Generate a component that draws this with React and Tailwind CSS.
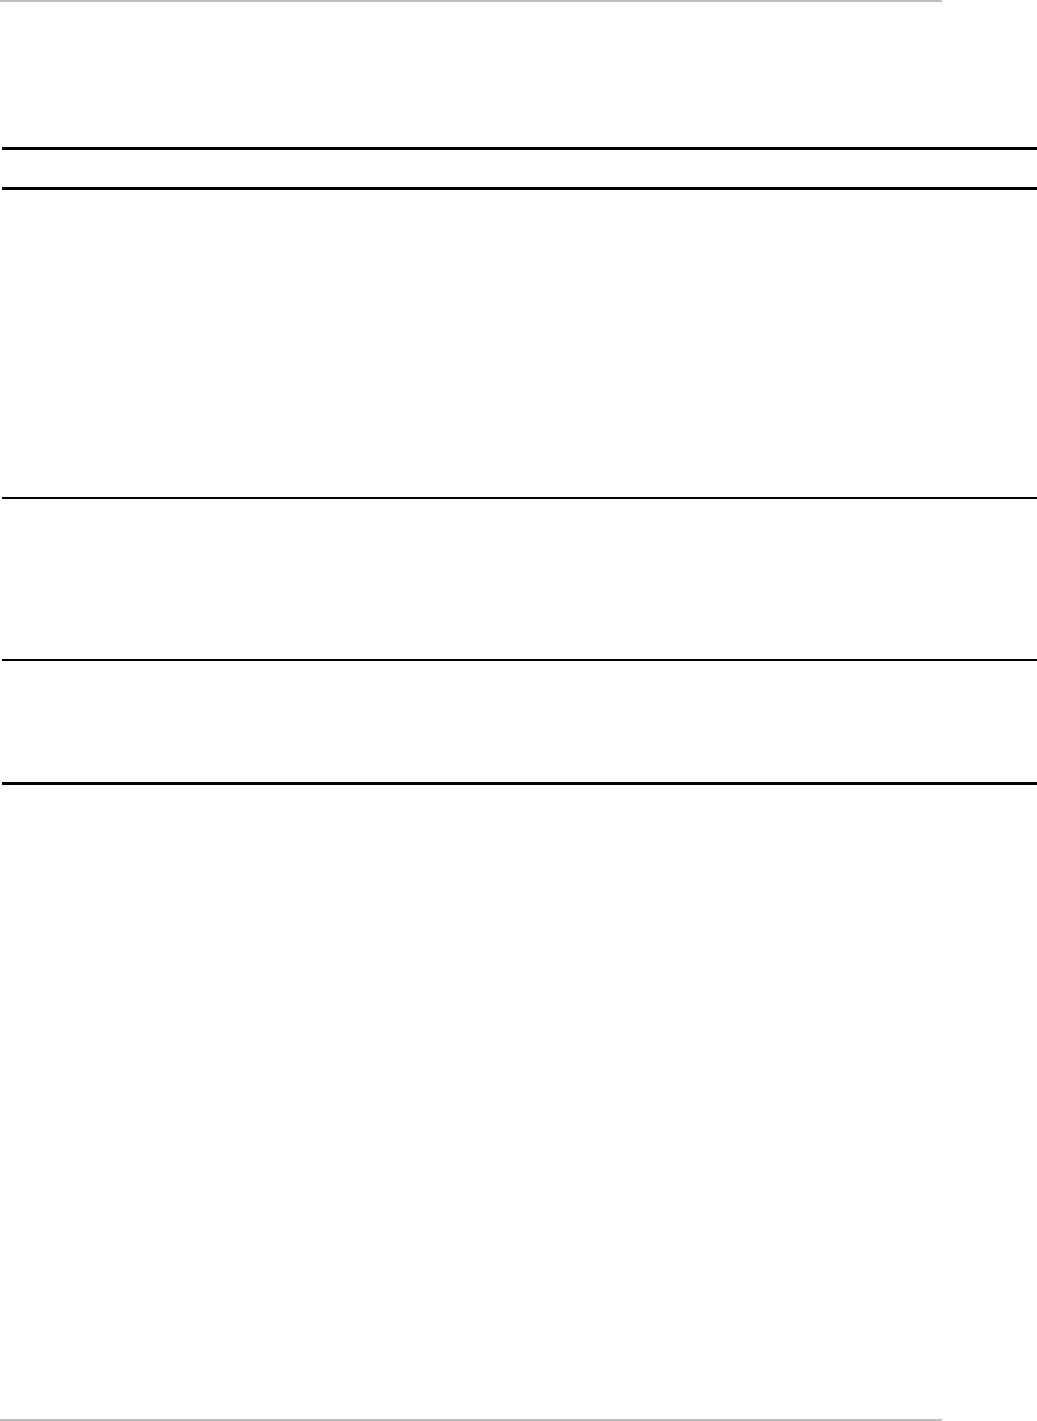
export default function App() {
  const rows = [
    { id: 1, className: 'h-[309px] border-b-2' },
    { id: 2, className: 'h-[162px] border-b-2' },
    { id: 3, className: 'h-[124px] border-b-[3px]' },
  ]

  return (
    <div className="min-h-[1421px] w-[1037px] bg-white flex flex-col" style={{ fontFamily: '"Liberation Sans", Arial, sans-serif' }}>
      {/* Page header rule */}
      <div className="h-[2px] w-[942px] bg-[#bfbfbf]" />

      <div className="h-[145px]" />

      {/* Table */}
      <div className="ml-[2px] w-[1035px]">
        <div className="h-[43px] border-y-[3px] border-black" />
        {rows.map((row) => (
          <div key={row.id} className={`${row.className} border-black`} />
        ))}
      </div>

      <div className="flex-1" />

      {/* Page footer rule */}
      <div className="h-[2px] w-[942px] bg-[#bfbfbf]" />
    </div>
  )
}
